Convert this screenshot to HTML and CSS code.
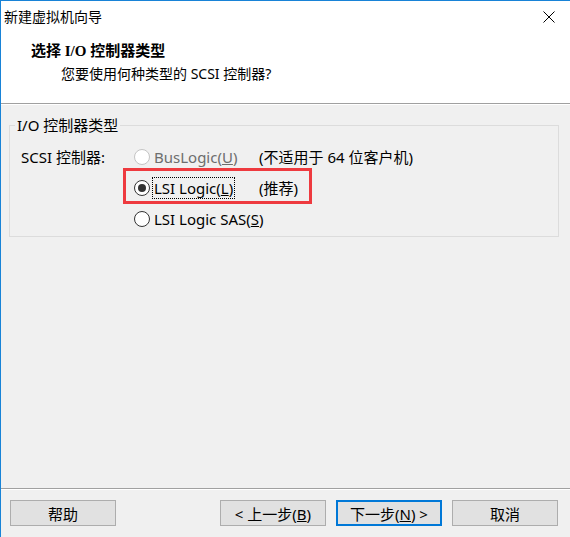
FILE: index.html
```html
<!DOCTYPE html>
<html lang="zh-CN">
<head>
  <meta charset="UTF-8">
  <title>新建虚拟机向导</title>
  <link rel="stylesheet" href="styles.css">
</head>
<body>
  <div class="window">
    <div class="titlebar">
      <span class="title">新建虚拟机向导</span>
      <svg class="close" width="12" height="12" viewBox="0 0 12 12">
        <path d="M0.5 0.5 L11.5 11.5 M11.5 0.5 L0.5 11.5" stroke="#000" stroke-width="1" fill="none"/>
      </svg>
    </div>

    <div class="header">
      <h1>选择 I/O 控制器类型</h1>
      <p>您要使用何种类型的 SCSI 控制器?</p>
    </div>
    <div class="sep"></div>

    <div class="content">
      <fieldset class="group">
        <legend>I/O 控制器类型</legend>
        <div class="row">
          <span class="field-label">SCSI 控制器:</span>
          <span class="radio disabled"></span>
          <span class="opt disabled-text">BusLogic(<u>U</u>)</span>
          <span class="note">(不适用于 64 位客户机)</span>
        </div>
        <div class="row">
          <span class="field-label"></span>
          <span class="radio checked"></span>
          <span class="opt"><span class="focus">LSI Logic(<u>L</u>)</span></span>
          <span class="note">(推荐)</span>
          <div class="mark"></div>
        </div>
        <div class="row">
          <span class="field-label"></span>
          <span class="radio"></span>
          <span class="opt">LSI Logic SAS(<u>S</u>)</span>
          <span class="note"></span>
        </div>
      </fieldset>
    </div>

    <div class="sep"></div>
    <div class="footer">
      <button type="button" class="btn">帮助</button>
      <div class="spacer"></div>
      <button type="button" class="btn">&lt; 上一步(<u>B</u>)</button>
      <button type="button" class="btn default">下一步(<u>N</u>) &gt;</button>
      <button type="button" class="btn">取消</button>
    </div>
  </div>
</body>
</html>
```

FILE: styles.css
```css
body {
  margin: 0;
  font-family: "Noto Sans", "Noto Sans CJK SC", sans-serif;
  font-size: 14px;
  color: #000;
  background-color: #f0f0f0;
}

.window {
  width: 570px;
  height: 537px;
  box-sizing: border-box;
  border-left: 1px solid #1883d7;
  border-top: 1px solid #1883d7;
  display: flex;
  flex-direction: column;
  background-color: #f0f0f0;
  overflow: hidden;
}

.titlebar {
  height: 32px;
  line-height: 32px;
  background-color: #fff;
  display: flex;
  align-items: center;
  padding-left: 3px;
  padding-right: 15px;
}

.title {
  flex: 1;
}

.close {
  display: block;
  margin-top: -1px;
}

.header {
  height: 70px;
  box-sizing: border-box;
  background-color: #fff;
  padding-top: 8px;
}

.header h1 {
  margin: 0 0 3px 30px;
  font-family: "Liberation Serif", "Noto Sans CJK SC", serif;
  font-size: 15px;
  font-weight: bold;
  line-height: 20px;
}

.header p {
  margin: 0 0 0 60px;
  line-height: 20px;
}

.sep {
  border-top: 1px solid #a0a0a0;
  border-bottom: 1px solid #fff;
}

.content {
  flex: 1;
  padding: 10px 11px 0 8px;
  font-size: 15px;
}

.group {
  margin: 0;
  padding: 6px 0 2px 0;
  border: 1px solid #dcdcdc;
}

.group legend {
  margin-left: 5px;
  padding: 0 2px;
  line-height: 20px;
}

.row {
  position: relative;
  height: 31px;
  padding-left: 11px;
  display: grid;
  grid-template-columns: 109px 16px 101px auto;
  column-gap: 4px;
  align-items: center;
  white-space: nowrap;
}

.radio {
  width: 16px;
  height: 16px;
  box-sizing: border-box;
  border: 1px solid #333;
  border-radius: 50%;
  background-color: #fff;
  position: relative;
}

.radio.checked::after {
  content: "";
  position: absolute;
  left: 3px;
  top: 3px;
  width: 8px;
  height: 8px;
  border-radius: 50%;
  background-color: #333;
}

.radio.disabled {
  border-color: #c4c4c4;
}

.disabled-text {
  color: #6d6d6d;
}

.focus {
  border: 1px dotted #000;
  padding: 0 1px;
  margin-left: -2px;
}

.mark {
  position: absolute;
  left: 113px;
  top: -4px;
  width: 189px;
  height: 36px;
  box-sizing: border-box;
  border: 3px solid #ee3a3f;
  pointer-events: none;
}

.footer {
  height: 47px;
  display: flex;
  align-items: flex-start;
  padding: 10px 12px 0 9px;
  box-sizing: border-box;
  gap: 10px;
}

.spacer {
  flex: 1;
}

.btn {
  width: 106px;
  height: 26px;
  padding: 0;
  font-family: inherit;
  font-size: 15px;
  color: #000;
  background-color: #e1e1e1;
  border: 1px solid #adadad;
}

.btn.default {
  border: 2px solid #0078d7;
}
```
